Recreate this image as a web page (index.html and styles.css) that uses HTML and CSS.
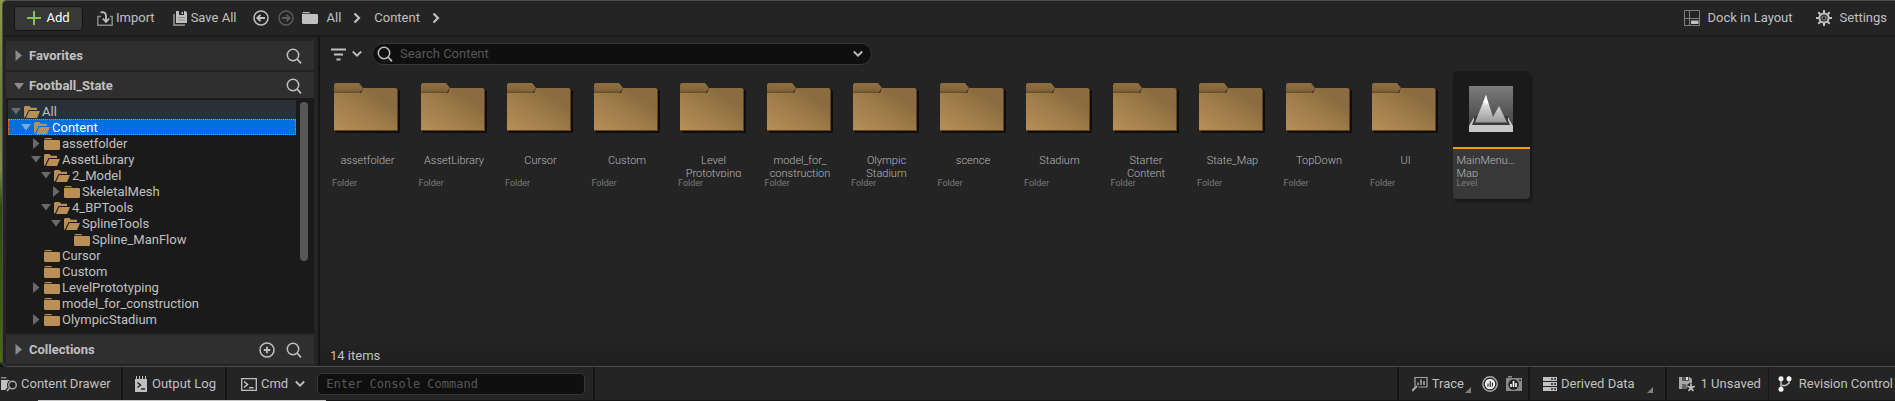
FILE: index.html
```html
<!DOCTYPE html>
<html lang="en">
<head>
<meta charset="utf-8">
<title>Content Browser</title>
<link rel="stylesheet" href="styles.css">
</head>
<body>
<svg class="defs" aria-hidden="true">
  <defs>
    <linearGradient id="folderBody" x1="0" y1="1" x2="1" y2="0">
      <stop offset="0" stop-color="#b78f58"/><stop offset=".5" stop-color="#9c7a48"/><stop offset=".75" stop-color="#8a6c40"/><stop offset="1" stop-color="#8a6c40"/>
    </linearGradient>
    <linearGradient id="folderTab" x1="0" y1="0" x2="0" y2="1">
      <stop offset="0" stop-color="#8f6f40"/><stop offset=".7" stop-color="#84663a"/><stop offset="1" stop-color="#654d2a"/>
    </linearGradient>
    <linearGradient id="levelSky" x1="0" y1="0" x2="0" y2="1">
      <stop offset="0" stop-color="#7c7c7c"/><stop offset="1" stop-color="#3a3a3a"/>
    </linearGradient>
    <linearGradient id="levelPeak" x1="0" y1="0" x2="0" y2="1">
      <stop offset="0" stop-color="#fff"/><stop offset="1" stop-color="#999"/>
    </linearGradient>
    <symbol id="i-search" viewBox="0 0 16 16"><circle cx="7" cy="7" r="5.700" fill="none" stroke="currentColor" stroke-width="1.500"/><path d="M11 11l4 4.300" fill="none" stroke="currentColor" stroke-width="1.700"/></symbol>
    <symbol id="i-chev-r" viewBox="0 0 8 12"><path d="M1.500 1.500L6 6l-4.500 4.500" fill="none" stroke="currentColor" stroke-width="2.200"/></symbol>
    <symbol id="i-chev-d" viewBox="0 0 10 8"><path d="M.8 1.500L5 5.700l4.200-4.200" fill="none" stroke="currentColor" stroke-width="1.800"/></symbol>
    <symbol id="i-folder" viewBox="0 0 16 12"><path d="M1 0h6l1.500 1.200H.3zM0 2h15l1 .8V11l-.8 1H.8L0 11z" fill="currentColor"/></symbol>
    <symbol id="i-folder-open" viewBox="0 0 16 12"><path d="M0 12V1l1-1h4.500l1.500 1.700h6V4H4.500L1.500 10.500z" fill="currentColor"/><path d="M5.200 5H16l-3 7H2z" fill="currentColor"/></symbol>
    <symbol id="i-down" viewBox="0 0 10 7"><path d="M0 0h10L5 6.500z" fill="currentColor"/></symbol>
    <symbol id="i-right" viewBox="0 0 7 11"><path d="M0 0l6.500 5.500L0 11z" fill="currentColor"/></symbol>
    <symbol id="i-asset-folder" viewBox="0 0 66 50">
      <path d="M2 6h62l2 2v42H2z" fill="#0e0e0e"/>
      <path d="M0 10h27l2-5h33l2 2v41H0z" fill="url(#folderBody)"/>
      <path d="M0 10V1.500L1.500 0H25l4 5-3 5z" fill="url(#folderTab)"/>
      <path d="M0 47.500h63.500V7" fill="none" stroke="#5e431e"/>
    </symbol>
    <symbol id="i-corner" viewBox="0 0 6 6"><path d="M6 0v6H0z" fill="currentColor"/></symbol>
  </defs>
</svg>

<main class="window">
  <header class="toolbar">
    <button class="btn add"><svg width="14" height="14" viewBox="0 0 14 14"><path d="M7 0v14M0 7h14" stroke="#8bc34a" stroke-width="2"/></svg>Add</button>
    <button class="btn import"><svg width="16" height="16" viewBox="0 0 16 16" fill="none" stroke="#8a8a8a" stroke-width="1.500"><path d="M4 6.500H.8v8.700h14.400V6.500H13"/><path d="M3.500 2.500C7 1.500 9 3 9 6v5M5.800 8.500L9 12l3.200-3.500" stroke="#c0c0c0" stroke-width="1.800"/></svg>Import</button>
    <button class="btn save"><svg width="14" height="15" viewBox="0 0 14 15"><path d="M1 3v11.200h11" fill="none" stroke="#8a8a8a" stroke-width="1.700"/><path d="M3 0h9.500L14 1.500V12H3z" fill="#c0c0c0"/><path d="M6 0h5v4H6z" fill="#242424"/><path d="M8.500 1h1.500v2H8.500z" fill="#c0c0c0"/><path d="M5 6.500h7M5 9h7" stroke="#8a8a8a"/></svg>Save All</button>
    <button class="btn nav" aria-label="Back"><svg width="16" height="16" viewBox="0 0 16 16" fill="none" stroke="currentColor" stroke-width="1.500"><circle cx="8" cy="8" r="7"/><path d="M12 8H5M7.500 4.800L4.300 8l3.200 3.200" stroke-width="1.900"/></svg></button>
    <button class="btn nav off" aria-label="Forward"><svg width="16" height="16" viewBox="0 0 16 16" fill="none" stroke="currentColor" stroke-width="1.500"><circle cx="8" cy="8" r="7"/><path d="M4 8h7M8.500 4.800L11.700 8l-3.200 3.200" stroke-width="1.900"/></svg></button>
    <nav class="crumbs" aria-label="Path">
      <svg width="16" height="12"><use href="#i-folder"/></svg>
      <a href="#all">All</a>
      <svg width="8" height="12"><use href="#i-chev-r"/></svg>
      <a href="#content">Content</a>
      <svg width="8" height="12"><use href="#i-chev-r"/></svg>
    </nav>
    <button class="btn dock"><svg width="16" height="16" viewBox="0 0 16 16" fill="none" stroke="#808080"><path d="M.5.5h15v15H.5zM5.500.5v15M.5 8.500h15"/><path d="M7 10.500h7.500v3.500H7z" fill="#c0c0c0" stroke="none"/></svg>Dock in Layout</button>
    <button class="btn settings"><svg width="16" height="16" viewBox="0 0 16 16" fill="none" stroke="currentColor"><circle cx="8" cy="8" r="4.600" stroke-width="2"/><circle cx="8" cy="8" r="2" stroke="#808080" stroke-width="1.200"/><path d="M8 0v3M8 13v3M0 8h3M13 8h3M2.300 2.300l2.200 2.200M11.500 11.500l2.200 2.200M2.300 13.700l2.200-2.200M11.500 4.500l2.200-2.200" stroke-width="2"/></svg>Settings</button>
  </header>

  <div class="panes">
    <aside class="sidebar">
      <section class="head favorites"><svg class="tri" width="10" height="11"><use href="#i-right"/></svg><h2>Favorites</h2><button class="icon" aria-label="Search favorites"><svg width="16" height="16"><use href="#i-search"/></svg></button></section>
      <section class="head project"><svg class="tri" width="10" height="7"><use href="#i-down"/></svg><h2>Football_State</h2><button class="icon" aria-label="Search folders"><svg width="16" height="16"><use href="#i-search"/></svg></button></section>
      <div class="tree-pane">
        <ul class="tree">
          <li class="row root"><svg class="arrow" viewBox="0 0 10 11"><use href="#i-down" y="2" width="10" height="7"/></svg><svg class="fold"><use href="#i-folder-open"/></svg>All</li>
          <li class="row l1 selected"><svg class="arrow" viewBox="0 0 10 11"><use href="#i-down" y="2" width="10" height="7"/></svg><svg class="fold"><use href="#i-folder-open"/></svg>Content</li>
          <li class="row l2"><svg class="arrow" viewBox="0 0 10 11"><use href="#i-right" x="2" width="7" height="11"/></svg><svg class="fold"><use href="#i-folder"/></svg>assetfolder</li>
          <li class="row l2"><svg class="arrow" viewBox="0 0 10 11"><use href="#i-down" y="2" width="10" height="7"/></svg><svg class="fold"><use href="#i-folder-open"/></svg>AssetLibrary</li>
          <li class="row l3"><svg class="arrow" viewBox="0 0 10 11"><use href="#i-down" y="2" width="10" height="7"/></svg><svg class="fold"><use href="#i-folder-open"/></svg>2_Model</li>
          <li class="row l4"><svg class="arrow" viewBox="0 0 10 11"><use href="#i-right" x="2" width="7" height="11"/></svg><svg class="fold"><use href="#i-folder"/></svg>SkeletalMesh</li>
          <li class="row l3"><svg class="arrow" viewBox="0 0 10 11"><use href="#i-down" y="2" width="10" height="7"/></svg><svg class="fold"><use href="#i-folder-open"/></svg>4_BPTools</li>
          <li class="row l4"><svg class="arrow" viewBox="0 0 10 11"><use href="#i-down" y="2" width="10" height="7"/></svg><svg class="fold"><use href="#i-folder-open"/></svg>SplineTools</li>
          <li class="row l5"><svg class="arrow"></svg><svg class="fold"><use href="#i-folder"/></svg>Spline_ManFlow</li>
          <li class="row l2"><svg class="arrow"></svg><svg class="fold"><use href="#i-folder"/></svg>Cursor</li>
          <li class="row l2"><svg class="arrow"></svg><svg class="fold"><use href="#i-folder"/></svg>Custom</li>
          <li class="row l2"><svg class="arrow" viewBox="0 0 10 11"><use href="#i-right" x="2" width="7" height="11"/></svg><svg class="fold"><use href="#i-folder"/></svg>LevelPrototyping</li>
          <li class="row l2"><svg class="arrow"></svg><svg class="fold"><use href="#i-folder"/></svg>model_for_construction</li>
          <li class="row l2"><svg class="arrow" viewBox="0 0 10 11"><use href="#i-right" x="2" width="7" height="11"/></svg><svg class="fold"><use href="#i-folder"/></svg>OlympicStadium</li>
          <li class="row l2"><svg class="arrow"></svg><svg class="fold"><use href="#i-folder"/></svg></li>
        </ul>
        <div class="scroll"><div class="thumb-bar"></div></div>
      </div>
      <section class="head collections"><svg class="tri" width="10" height="11"><use href="#i-right"/></svg><h2>Collections</h2><button class="icon" aria-label="Add collection"><svg width="16" height="16" viewBox="0 0 16 16" fill="none" stroke="currentColor" stroke-width="1.500"><circle cx="8" cy="8" r="7"/><path d="M8 4.800v6.400M4.800 8h6.400" stroke-width="1.800"/></svg></button><button class="icon" aria-label="Search collections"><svg width="16" height="16"><use href="#i-search"/></svg></button></section>
    </aside>

    <section class="content">
      <div class="filter-row">
        <button class="btn filter" aria-label="Filters"><svg width="15" height="13" viewBox="0 0 15 13"><path d="M0 1.500h15M3 6.500h9M5.500 11.500h4" stroke="currentColor" stroke-width="1.800"/></svg><svg width="10" height="8"><use href="#i-chev-d"/></svg></button>
        <label class="search"><svg width="16" height="16"><use href="#i-search"/></svg><input type="text" placeholder="Search Content" aria-label="Search Content"><svg width="10" height="8"><use href="#i-chev-d"/></svg></label>
      </div>
      <div class="assets">
        <article class="tile"><svg class="big"><use href="#i-asset-folder"/></svg><h3>assetfolder</h3><p>Folder</p></article>
        <article class="tile"><svg class="big"><use href="#i-asset-folder"/></svg><h3>AssetLibrary</h3><p>Folder</p></article>
        <article class="tile"><svg class="big"><use href="#i-asset-folder"/></svg><h3>Cursor</h3><p>Folder</p></article>
        <article class="tile"><svg class="big"><use href="#i-asset-folder"/></svg><h3>Custom</h3><p>Folder</p></article>
        <article class="tile"><svg class="big"><use href="#i-asset-folder"/></svg><h3>Level<br>Prototyping</h3><p>Folder</p></article>
        <article class="tile"><svg class="big"><use href="#i-asset-folder"/></svg><h3>model_for_<br>construction</h3><p>Folder</p></article>
        <article class="tile"><svg class="big"><use href="#i-asset-folder"/></svg><h3>Olympic<br>Stadium</h3><p>Folder</p></article>
        <article class="tile"><svg class="big"><use href="#i-asset-folder"/></svg><h3>scence</h3><p>Folder</p></article>
        <article class="tile"><svg class="big"><use href="#i-asset-folder"/></svg><h3>Stadium</h3><p>Folder</p></article>
        <article class="tile"><svg class="big"><use href="#i-asset-folder"/></svg><h3>Starter<br>Content</h3><p>Folder</p></article>
        <article class="tile"><svg class="big"><use href="#i-asset-folder"/></svg><h3>State_Map</h3><p>Folder</p></article>
        <article class="tile"><svg class="big"><use href="#i-asset-folder"/></svg><h3>TopDown</h3><p>Folder</p></article>
        <article class="tile"><svg class="big"><use href="#i-asset-folder"/></svg><h3>UI</h3><p>Folder</p></article>
        <article class="tile level">
          <div class="preview"><svg width="44" height="46" viewBox="0 0 44 46"><path d="M0 0h44v46H0z" fill="url(#levelSky)"/><path d="M0 40l5-10h34l5 10z" fill="#3a3a3a"/><path d="M0 40l5-9v3l-2 5h38l-2-5v-3l5 9v6H0z" fill="#c8c8c8"/><path d="M6 36.500L17 9l7 22 6-11 8 16.500z" fill="url(#levelPeak)"/><path d="M17 9l-3 8 2-1 1 3 2-2z" fill="#fff"/></svg></div>
          <h3>MainMenu…<br>Map</h3><p>Level</p>
        </article>
      </div>
      <p class="count">14 items</p>
    </section>
  </div>
</main>

<footer class="status">
  <button class="btn drawer"><svg width="17" height="16" viewBox="0 0 17 16"><path d="M0 1h5l1 1.500H0z" fill="#8a8a8a"/><path d="M0 4h13v10H0z" fill="#c0c0c0"/><circle cx="11.500" cy="9" r="4" fill="#242424" stroke="#242424" stroke-width="3"/><path d="M9 11.500L5.500 15.500" stroke="#242424" stroke-width="4"/><circle cx="11.500" cy="9" r="3.800" fill="#242424" stroke="#a8a8a8" stroke-width="1.400"/><path d="M9 11.500L6 15" stroke="#a8a8a8" stroke-width="1.600"/></svg>Content Drawer</button>
  <button class="btn log"><svg width="12" height="16" viewBox="0 0 12 16"><path d="M0 3h12v13H0z" fill="#c0c0c0"/><path d="M1.500 0v4M4.500 0v4M7.500 0v4M10.500 0v4" stroke="#c0c0c0"/><path d="M2.500 6.500l3 2.500-3 2.500M6 13h4" fill="none" stroke="#242424" stroke-width="1.500"/></svg>Output Log</button>
  <div class="console">
    <button class="btn cmd"><svg width="16" height="13" viewBox="0 0 16 13" fill="none" stroke="currentColor"><path d="M.7.7h14.600v11.600H.7z" stroke-width="1.300"/><path d="M3 3.500l3.500 3L3 9.500M8 9.800h4.500" stroke-width="1.600"/></svg>Cmd<svg width="10" height="8"><use href="#i-chev-d"/></svg></button>
    <input type="text" placeholder="Enter Console Command" aria-label="Console command">
  </div>
  <div class="group trace">
    <button class="btn"><svg width="16" height="16" viewBox="0 0 16 16" fill="none" stroke="#a8a8a8"><path d="M3 10.500V1.500h12v9.500H6.500" stroke-width="1.200"/><path d="M0 15l5-5" stroke-width="2"/><path d="M6 9V6.500M9 9V3.500M12 9V5" stroke="#8a8a8a" stroke-width="2"/></svg>Trace</button>
    <svg class="corner" width="6" height="6"><use href="#i-corner"/></svg>
    <button class="icon" aria-label="Record trace"><svg width="16" height="16" viewBox="0 0 16 16"><circle cx="8" cy="8" r="7.200" fill="none" stroke="#a8a8a8" stroke-width="1.500"/><circle cx="8" cy="8" r="5.200" fill="#f0f0f0"/><path d="M6 10.500V7.500M8.200 11V5M10.400 10.500V6.500" stroke="#333" stroke-width="1.200"/></svg></button>
    <button class="icon" aria-label="Trace snapshot"><svg width="16" height="16" viewBox="0 0 16 16"><path d="M2 0h4v1.500H2zM0 2h16v13H0z" fill="#8a8a8a"/><circle cx="7.500" cy="8.500" r="5.200" fill="#242424"/><path d="M5 11V8M7.500 11V5M10 11V7" stroke="#fff" stroke-width="1.600"/><path d="M13 3.500h2v1.500h-2z" fill="#242424"/></svg></button>
  </div>
  <div class="group derived">
    <button class="btn"><svg width="14" height="14" viewBox="0 0 14 14"><path d="M0 0h14v4H0zM0 5h14v4H0zM0 10h14v4H0z" fill="#c0c0c0"/><path d="M8 2h2M11 2h2M8 7h2M11 7h2M8 12h2M11 12h2" stroke="#242424" stroke-width="1.400"/></svg>Derived Data</button>
    <svg class="corner" width="6" height="6"><use href="#i-corner"/></svg>
  </div>
  <div class="group unsaved">
    <button class="btn"><svg width="16" height="16" viewBox="0 0 16 16"><path d="M0 1h10.500L13 3v10H0z" fill="#a8a8a8"/><path d="M3 1h7v4H3z" fill="#555"/><path d="M7 1h2v3H7z" fill="#e0e0e0"/><path d="M3 8h4v5H3z" fill="#666"/><circle cx="12" cy="11.500" r="4.500" fill="#242424"/><path d="M12 11.500V7.500M12 11.500l3.800-1.200M12 11.500l2.400 3.600M12 11.500l-2.400 3.600M12 11.500l-3.800-1.200" stroke="#c0c0c0" stroke-width="1.700" fill="none"/></svg>1 Unsaved</button>
  </div>
  <div class="group revision">
    <button class="btn"><svg width="14" height="16" viewBox="0 0 14 16"><path d="M3 3v10M3 9.500h4.500L11 7V3" fill="none" stroke="#c0c0c0" stroke-width="1.500"/><circle cx="3" cy="2.800" r="2.500" fill="#fff"/><circle cx="11" cy="2.800" r="2.500" fill="#fff"/><circle cx="3" cy="13.200" r="2.500" fill="#fff"/></svg>Revision Control</button>
  </div>
</footer>
<div class="edge"></div>
</body>
</html>
```
FILE: styles.css
```css
* { box-sizing: border-box; }

body {
  margin: 0;
  height: 100vh;
  display: flex;
  flex-direction: column;
  overflow: hidden;
  background: linear-gradient(#8a9a4e 0, #6b7c3d 25%, #7d8a55 42%, #2f4a16 52%, #3f5c14 75%, #4c6c14 90%, #151515 91%);
  color: #c0c0c0;
  font: 13px/16px Roboto, "Liberation Sans", sans-serif;
}

.defs { position: absolute; width: 0; height: 0; }

svg { flex: none; display: block; }
h2, h3, p, ul { margin: 0; padding: 0; font-weight: 400; }

.btn, .icon {
  display: flex;
  align-items: center;
  padding: 0;
  border: 0;
  background: none;
  color: inherit;
  font: inherit;
  white-space: nowrap;
}

input {
  min-width: 0;
  border: 0;
  outline: 0;
  background: none;
  color: #c0c0c0;
  font: inherit;
}
input::placeholder { color: #575757; opacity: 1; }

/* Window */
.window {
  flex: 1;
  min-height: 0;
  margin-left: 2px;
  display: flex;
  flex-direction: column;
  border: 1px solid #4c4c4c;
  border-right: 0;
  border-radius: 5px 0 0 5px;
  background: #242424;
  overflow: hidden;
}

.toolbar {
  height: 36px;
  flex: none;
  display: flex;
  align-items: center;
  padding: 0 8px 0 11px;
  border-bottom: 2px solid #1a1a1a;
}
.add {
  height: 25px;
  width: 69px;
  justify-content: center;
  gap: 5px;
  border: 1px solid #151515;
  border-radius: 4px;
  background: #383838;
  color: #fff;
}
.import { margin-left: 14px; gap: 3px; }
.save { margin-left: 18px; gap: 4px; }
.nav { margin-left: 17px; }
.nav.off { margin-left: 9px; color: #5c5c5c; }
.crumbs { display: flex; align-items: center; margin-left: 8px; }
.crumbs a { color: inherit; text-decoration: none; margin: 0 12px 0 8px; }
.crumbs a + svg + a { margin-left: 13px; }
.dock { margin-left: auto; gap: 8px; }
.settings { margin-left: 23px; gap: 8px; }

.panes { flex: 1; min-height: 0; display: flex; }

/* Sidebar */
.sidebar {
  width: 317px;
  flex: none;
  display: flex;
  flex-direction: column;
  padding: 4px 4px 2px 3px;
  border-right: 2px solid #151515;
}
.head {
  flex: none;
  display: flex;
  align-items: center;
  padding: 0 12px 0 8px;
  background: #2f2f2f;
}
.head h2 { flex: 1; margin-left: 5px; font-size: 13px; font-weight: 700; }
.tri { color: #8c8c8c; }
.icon + .icon { margin-left: 11px; }
.favorites { height: 29px; }
.project { height: 26px; margin-top: 2px; padding-top: 2px; }
.collections { height: 29px; margin-top: 2px; }

.tree-pane {
  flex: 1;
  min-height: 0;
  display: flex;
  padding: 2px 6px 3px 2px;
  background: #1a1a1a;
}
.tree { flex: 1; list-style: none; overflow: hidden; }
.row {
  height: 16px;
  display: flex;
  align-items: center;
  padding: 1px 0 0 3px;
  line-height: 15px;
  white-space: nowrap;
}
.row.root { height: 19px; padding-top: 4px; background: #2a3037; }
.row.selected { background: #0070e0; color: #fff; outline: 1px dotted #d08a2a; outline-offset: -1px; }
.row.l1 { padding-left: 13px; }
.row.l2 { padding-left: 23px; }
.row.l3 { padding-left: 33px; }
.row.l4 { padding-left: 43px; }
.row.l5 { padding-left: 53px; }
.arrow { width: 10px; height: 11px; margin-right: 3px; color: #6a6a6a; }
.selected .arrow { color: #7ba8dc; }
.fold { width: 16px; height: 12px; margin-right: 2px; color: #b98f55; }
.scroll { width: 8px; margin-left: 4px; padding-top: 2px; }
.thumb-bar { height: 159px; border-radius: 4px; background: #575757; }

/* Content */
.content {
  flex: 1;
  min-width: 0;
  display: flex;
  flex-direction: column;
  padding: 6px 8px 1px;
  background: linear-gradient(#242424 90%, #1f1f1f);
}
.filter-row { display: flex; align-items: center; padding-left: 3px; }
.filter { gap: 6px; }
.search {
  flex: 0 1 500px;
  height: 22px;
  display: flex;
  align-items: center;
  gap: 7px;
  margin-left: 10px;
  padding: 0 8px 0 4px;
  border: 1px solid #363636;
  border-radius: 11px;
  background: #0f0f0f;
}
.search input { flex: 1; padding: 0; }

.assets {
  display: grid;
  grid-template-columns: repeat(14, 1fr);
  max-width: 1211px;
  margin-top: 6px;
}
.tile { width: 77px; height: 128px; padding-left: 4px; }
.big { width: 66px; height: 50px; margin: 12px 0 21px 2px; }
.tile h3 {
  height: 23px;
  padding-right: 2px;
  overflow: hidden;
  color: #b8b8b8;
  font-size: 11px;
  font-weight: 300;
  line-height: 13px;
  text-align: center;
}
.tile p { color: #7a7a7a; font-size: 9px; line-height: 12px; }
.level {
  padding: 0;
  border-radius: 4px;
  background: #383838;
  box-shadow: 2px 3px 3px #171717;
}
.preview {
  height: 78px;
  display: flex;
  justify-content: center;
  align-items: center;
  border-bottom: 2px solid #f90;
  border-radius: 4px 4px 0 0;
  background: #1a1a1a;
}
.level h3 { margin: 5px 0 0 4px; text-align: left; }
.level p { margin-left: 4px; }
.count { margin-top: auto; padding: 0 0 1px 2px; }

/* Status bar */
.status {
  height: 33px;
  flex: none;
  display: flex;
  background: #242424;
}
.drawer { width: 123px; padding: 1px 0 0 1px; gap: 3px; border-right: 2px solid #151515; }
.log { width: 104px; padding: 1px 0 0 12px; gap: 5px; border-right: 2px solid #151515; }
.console { display: flex; align-items: center; padding: 1px 8px 0 14px; border-right: 2px solid #151515; }
.cmd { gap: 4px; }
.cmd :last-child { margin-left: 3px; }
.console input {
  width: 268px;
  height: 22px;
  margin-left: 12px;
  padding: 0 8px;
  border: 1px solid #363636;
  border-radius: 4px;
  background: #0f0f0f;
  font: 12px "DejaVu Sans Mono", "Liberation Mono", monospace;
}
.group { display: flex; align-items: center; padding-top: 1px; border-left: 2px solid #151515; }
.group .btn { gap: 4px; }
.corner { align-self: flex-end; margin-bottom: 7px; color: #808080; }
.trace { margin-left: auto; padding-left: 13px; padding-right: 6px; }
.trace .corner { margin-left: 1px; }
.trace .icon { margin-left: 11px; }
.trace .icon + .icon { margin-left: 8px; }
.derived { padding-left: 13px; padding-right: 12px; }
.derived .corner { margin-left: 12px; }
.unsaved { padding-left: 12px; padding-right: 7px; }
.group.unsaved .btn { gap: 6px; }
.revision { padding-left: 9px; padding-right: 2px; border-left-width: 1px; }
.group.revision .btn { gap: 7px; }

.edge { height: 1px; flex: none; background: linear-gradient(90deg, #242424 38px, #c8c8c8 38px 326px, #151515 326px); }
```
